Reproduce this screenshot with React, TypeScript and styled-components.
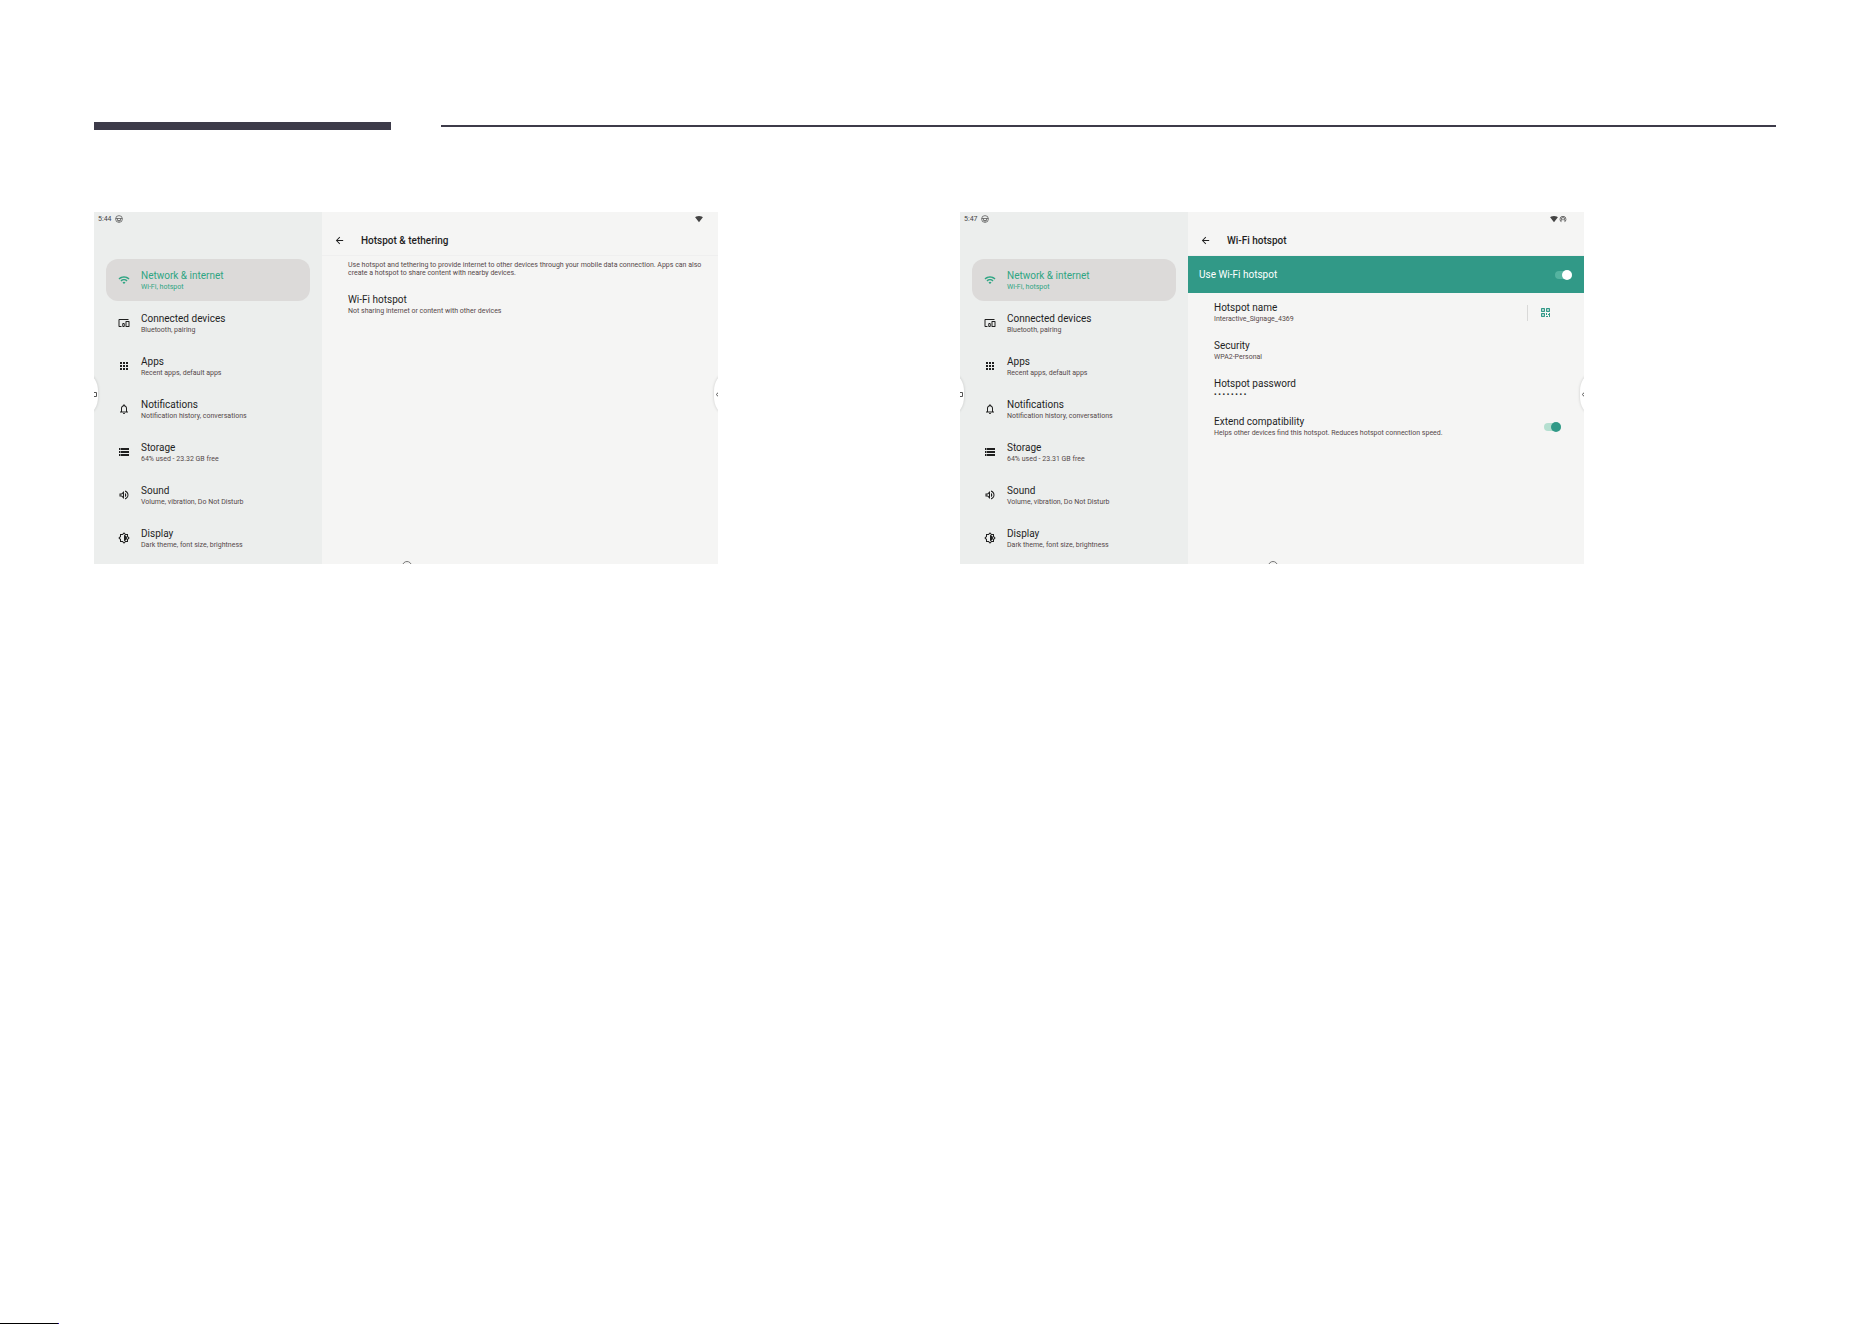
import React from "react";
import styled, { createGlobalStyle } from "styled-components";
import {
  MdWifi,
  MdDevicesOther,
  MdApps,
  MdNotificationsNone,
  MdStorage,
  MdOutlineVolumeUp,
  MdOutlineBrightnessMedium,
  MdArrowBack,
  MdSignalWifi4Bar,
  MdWifiTethering,
} from "react-icons/md";
import type { IconType } from "react-icons";

const GlobalStyle = createGlobalStyle`
  *, *::before, *::after { box-sizing: border-box; }
  body {
    margin: 0;
    background: #fff;
    color: #1f1f1f;
    font-family: Roboto, "Liberation Sans", sans-serif;
  }
  button, input { font: inherit; color: inherit; }
`;

const Page = styled.div`
  min-height: 100vh;
  display: flex;
  flex-direction: column;
  justify-content: space-between;
`;

const Content = styled.main`
  padding: 122px 96px 0 94px;
`;

const HeaderRules = styled.div`
  display: flex;
  align-items: center;
  gap: 50px;
  margin-bottom: 82px;
`;

const ThickRule = styled.div`
  width: 297px;
  height: 8px;
  background: #3d3b49;
`;

const ThinRule = styled.div`
  flex: 1;
  height: 2px;
  background: #3d3b49;
`;

const Figures = styled.div`
  display: grid;
  grid-template-columns: 1fr 1fr;
  column-gap: 242px;
  padding-right: 192px;
`;

const FooterMark = styled.footer`
  width: 59px;
  height: 1px;
  background: #000;
  border-right: 1px solid #2a00b8;
`;

const Screen = styled.section`
  position: relative;
  display: grid;
  grid-template-columns: 228px 1fr;
  height: 352px;
  overflow: hidden;
  background: #f5f5f4;
`;

const Sidebar = styled.div`
  background: #eceeed;
  padding: 0 12px;
`;

const StatusBar = styled.div<{ $end?: boolean; $trail?: number }>`
  display: flex;
  align-items: center;
  justify-content: ${(p) => (p.$end ? "flex-end" : "flex-start")};
  gap: ${(p) => (p.$end ? 1 : 3)}px;
  height: 13px;
  margin-left: ${(p) => (p.$end ? 0 : -8)}px;
  padding-right: ${(p) => p.$trail ?? 0}px;
  color: #444;
  font-size: 7px;
  line-height: 14px;
`;

const Nav = styled.nav`
  display: flex;
  flex-direction: column;
  gap: 1px;
  margin-top: 34px;
`;

const NavItem = styled.a<{ $active?: boolean }>`
  display: grid;
  grid-template-columns: 12px 1fr;
  column-gap: 11px;
  align-items: center;
  height: 42px;
  padding-left: 12px;
  border-radius: 12px;
  text-decoration: none;
  background: ${(p) => (p.$active ? "#dcdad9" : "transparent")};
  color: ${(p) => (p.$active ? "#2fa583" : "#1f1f1f")};
  --sub: ${(p) => (p.$active ? "#2fa583" : "#55494a")};
`;

const Labels = styled.span`
  display: flex;
  flex-direction: column;
  align-items: flex-start;
`;

const NavLabels = styled(Labels)`
  padding-top: 2px;
`;

const Title = styled.span`
  font-size: 10px;
  line-height: 12px;
  white-space: nowrap;
`;

const Sub = styled.span`
  font-size: 7px;
  line-height: 10px;
  white-space: nowrap;
  color: var(--sub, #55494a);
`;

const Dots = styled(Sub)`
  color: #1f1f1f;
  font-weight: 700;
`;

const AppBar = styled.header`
  display: flex;
  align-items: center;
  gap: 16px;
  height: 31px;
  padding: 1px 0 0 12px;
  border-bottom: 1px solid #efefef;
`;

const BackButton = styled.button`
  display: flex;
  padding: 0;
  border: 0;
  background: none;
  cursor: pointer;
`;

const Heading = styled.h2`
  margin: 0;
  font-size: 10px;
  line-height: 12px;
  font-weight: 500;
`;

const Intro = styled.p`
  margin: 5px 12px 0 26px;
  font-size: 7px;
  line-height: 8px;
  color: #55494a;
`;

const MainSwitch = styled.label`
  display: flex;
  align-items: center;
  justify-content: space-between;
  height: 37px;
  padding: 0 12px 0 11px;
  background: #319987;
  color: #fff;
`;

const Preferences = styled.div<{ $top?: number }>`
  display: flex;
  flex-direction: column;
  gap: 16px;
  margin-top: ${(p) => p.$top ?? 9}px;
  padding-left: 26px;
`;

const PreferenceRow = styled.div`
  display: flex;
  align-items: center;
  justify-content: space-between;
  height: 22px;
`;

const PreferenceLabel = styled.label`
  display: flex;
  align-items: center;
  justify-content: space-between;
  height: 22px;
  padding-right: 23px;
`;

const PreferenceButton = styled.button`
  padding: 0;
  border: 0;
  background: none;
  text-align: left;
  cursor: pointer;
`;

const QrButton = styled.button`
  display: flex;
  align-items: flex-start;
  height: 16px;
  margin-right: 34px;
  padding: 3px 0 0 13px;
  border: 0;
  border-left: 1px solid #d9d9d8;
  background: none;
  color: #319987;
  cursor: pointer;
`;

const Switch = styled.input<{ $track: string; $thumb: string }>`
  appearance: none;
  display: flex;
  align-items: center;
  justify-content: flex-end;
  width: 17px;
  height: 8px;
  margin: 0;
  border-radius: 4px;
  background: ${(p) => p.$track};

  &::before {
    content: "";
    width: 10px;
    height: 10px;
    flex: none;
    border-radius: 50%;
    background: ${(p) => p.$thumb};
  }

  &:not(:checked) {
    justify-content: flex-start;
  }
`;

const EdgeHandle = styled.button<{ $side: "left" | "right" }>`
  position: absolute;
  top: 163px;
  ${(p) => p.$side}: -16px;
  width: 20px;
  height: 38px;
  padding: 0;
  border: 0;
  border-radius: 10px / 16px;
  background: #fff;
  box-shadow: 0 0 3px rgba(0, 0, 0, 0.18);
  display: flex;
  align-items: center;
  justify-content: ${(p) => (p.$side === "left" ? "flex-end" : "flex-start")};
`;

const HomeButton = styled.button`
  position: absolute;
  left: 308px;
  bottom: -7px;
  width: 10px;
  height: 10px;
  padding: 0;
  border: 1px solid #777;
  border-radius: 50%;
  background: none;
`;

const AgentIcon = () => (
  <svg width="8" height="8" viewBox="0 0 16 16" fill="none" stroke="#555" strokeWidth="1.5" aria-hidden="true">
    <circle cx="8" cy="8" r="6.8" />
    <path d="M1.5 7h13M5 7v4h6V7M8 11v3.5" />
  </svg>
);

const QrIcon = () => (
  <svg width="9" height="9" viewBox="0 0 9 9" fill="none" stroke="currentColor" aria-hidden="true">
    <path d="M0 0h4v4H0zM5 0h4v4H5zM0 5h4v4H0z" fill="currentColor" fillOpacity="0.35" stroke="none" />
    <path d="M.5 .5h3v3h-3zM5.5 .5h3v3h-3zM.5 5.5h3v3h-3z" />
    <path d="M5.5 5v2M5 8.5h2M8.5 5v4M7 6.5h1" />
  </svg>
);

const HandleIcon = ({ side }: { side: "left" | "right" }) => (
  <svg width="4" height="7" viewBox="0 0 4 7" fill="none" stroke="#555" aria-hidden="true">
    {side === "left" ? <path d="M0 1.5h2.5v4H0" /> : <path d="M4 1.5L2.5 3.5L4 5.5" />}
  </svg>
);

type Entry = { icon: IconType; title: string; sub: string };

const entries = (free: string): Entry[] => [
  { icon: MdWifi, title: "Network & internet", sub: "Wi-Fi, hotspot" },
  { icon: MdDevicesOther, title: "Connected devices", sub: "Bluetooth, pairing" },
  { icon: MdApps, title: "Apps", sub: "Recent apps, default apps" },
  { icon: MdNotificationsNone, title: "Notifications", sub: "Notification history, conversations" },
  { icon: MdStorage, title: "Storage", sub: `64% used - ${free} GB free` },
  { icon: MdOutlineVolumeUp, title: "Sound", sub: "Volume, vibration, Do Not Disturb" },
  { icon: MdOutlineBrightnessMedium, title: "Display", sub: "Dark theme, font size, brightness" },
];

type SettingsScreenProps = {
  time: string;
  free: string;
  heading: string;
  statusIcons: React.ReactNode;
  statusTrail: number;
  children: React.ReactNode;
};

const SettingsScreen = ({ time, free, heading, statusIcons, statusTrail, children }: SettingsScreenProps) => (
  <Screen aria-label={heading}>
    <Sidebar>
      <StatusBar>
        <span>{time}</span>
        <AgentIcon />
      </StatusBar>
      <Nav aria-label="Settings">
        {entries(free).map(({ icon: Icon, title, sub }, i) => (
          <NavItem key={title} href="#" $active={i === 0}>
            <Icon size={12} />
            <NavLabels>
              <Title>{title}</Title>
              <Sub>{sub}</Sub>
            </NavLabels>
          </NavItem>
        ))}
      </Nav>
    </Sidebar>
    <div>
      <StatusBar $end $trail={statusTrail}>
        {statusIcons}
      </StatusBar>
      <AppBar>
        <BackButton aria-label="Back">
          <MdArrowBack size={11} />
        </BackButton>
        <Heading>{heading}</Heading>
      </AppBar>
      {children}
    </div>
    <EdgeHandle $side="left" aria-label="Open left toolbar">
      <HandleIcon side="left" />
    </EdgeHandle>
    <EdgeHandle $side="right" aria-label="Open right toolbar">
      <HandleIcon side="right" />
    </EdgeHandle>
    <HomeButton aria-label="Home" />
  </Screen>
);

const Preference = ({ title, children }: { title: string; children: React.ReactNode }) => (
  <PreferenceButton>
    <Labels>
      <Title>{title}</Title>
      {children}
    </Labels>
  </PreferenceButton>
);

export default function App() {
  return (
    <Page>
      <GlobalStyle />
      <Content>
        <HeaderRules>
          <ThickRule />
          <ThinRule />
        </HeaderRules>
        <Figures>
          <SettingsScreen
            time="5:44"
            free="23.32"
            heading="Hotspot & tethering"
            statusTrail={15}
            statusIcons={<MdSignalWifi4Bar size={8} />}
          >
            <Intro>
              Use hotspot and tethering to provide internet to other devices through your mobile data connection. Apps
              can also create a hotspot to share content with nearby devices.
            </Intro>
            <Preferences $top={17}>
              <PreferenceRow>
                <Preference title="Wi-Fi hotspot">
                  <Sub>Not sharing internet or content with other devices</Sub>
                </Preference>
              </PreferenceRow>
            </Preferences>
          </SettingsScreen>
          <SettingsScreen
            time="5:47"
            free="23.31"
            heading="Wi-Fi hotspot"
            statusTrail={17}
            statusIcons={
              <>
                <MdSignalWifi4Bar size={8} />
                <MdWifiTethering size={8} />
              </>
            }
          >
            <MainSwitch>
              <Title>Use Wi-Fi hotspot</Title>
              <Switch type="checkbox" defaultChecked $track="#55b3a0" $thumb="#fff" />
            </MainSwitch>
            <Preferences>
              <PreferenceRow>
                <Preference title="Hotspot name">
                  <Sub>Interactive_Signage_4369</Sub>
                </Preference>
                <QrButton aria-label="Share hotspot as QR code">
                  <QrIcon />
                </QrButton>
              </PreferenceRow>
              <PreferenceRow>
                <Preference title="Security">
                  <Sub>WPA2-Personal</Sub>
                </Preference>
              </PreferenceRow>
              <PreferenceRow>
                <Preference title="Hotspot password">
                  <Dots>• • • • • • • •</Dots>
                </Preference>
              </PreferenceRow>
              <PreferenceLabel>
                <Labels>
                  <Title>Extend compatibility</Title>
                  <Sub>Helps other devices find this hotspot. Reduces hotspot connection speed.</Sub>
                </Labels>
                <Switch type="checkbox" defaultChecked $track="#b5dfd0" $thumb="#319987" />
              </PreferenceLabel>
            </Preferences>
          </SettingsScreen>
        </Figures>
      </Content>
      <FooterMark />
    </Page>
  );
}
